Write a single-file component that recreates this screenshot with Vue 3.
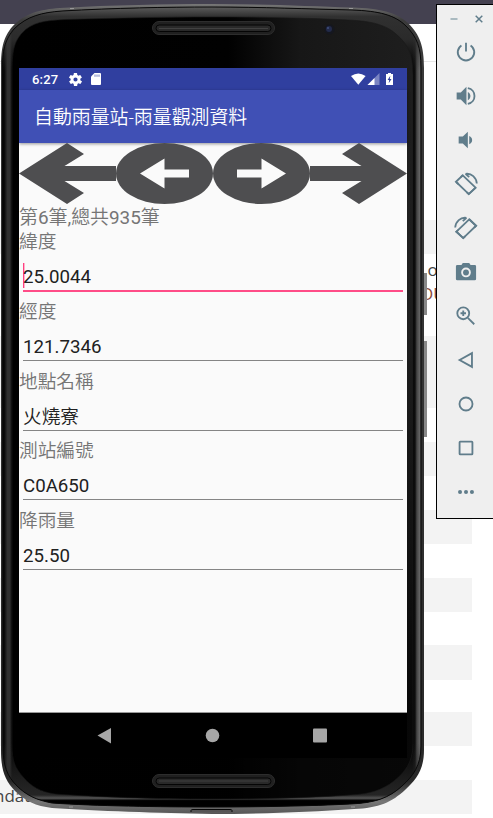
<script setup>
const stripes = [
  [220, 34], [336, 72], [442, 34], [510, 34], [578, 34], [645, 35], [712, 34], [780, 34]
]
const fields = [
  { label: '緯度', value: '25.0044', active: true },
  { label: '經度', value: '121.7346' },
  { label: '地點名稱', value: '火燒寮', han: true },
  { label: '測站編號', value: 'C0A650' },
  { label: '降雨量', value: '25.50' }
]
const body = 'M1 68 C1 46 4 37 12 27 C25 13 40 9.500 60 8 C115 5 165 4 212 4 C260 4 310 6 352 7.500 C380 8.500 396 12 408 23 C420 35 424 46 424 68 V750 C424 770 416 780 405 790 C392 802 379 808 354 809 C310 812 260 814 212 814 C160 813 95 811 52 808 C36 806 25 801 15 791 C5 780 1 771 1 750 Z'
const rim = 'M2.500 68 C2.500 47 6 39 14 29 C27 16 42 12.500 62 11 C115 8 165 7 212 7 C260 7 310 9 352 10 C379 11 395 15 406 26 C417 37 421 47 421 68 V746 C421 766 413 776 402 786 C389 798 375 803 350 804 C310 806 260 807 212 807 C160 807 95 806 52 803 C36 800 26 795 17 786 C7 776 3 766 3 746 Z'
const glass = 'M12 74 C12 51 14 42 22 33 C32 22 45 20.500 65 19.500 C120 18 165 17 212 17 C260 17 310 18 348 20 C372 21 386 25 396 34 C409 45 413 55 413 76 V744 C413 763 404 773 394 781 C382 790 371 794 350 795 C310 798 260 799 212 799 C155 799 95 797 55 794 C40 792 31 786 24 778 C15 768 12 762 12 744 Z'
</script>

<template>
  <main class="desktop">
    <div class="page">
      <div class="page-head"></div>
      <div class="page-rule"></div>
      <i v-for="s in stripes" :key="s[0]" class="stripe" :style="{ top: s[0] + 'px', height: s[1] + 'px' }"></i>
      <span class="code c1">.o</span>
      <span class="code c2">OU</span>
      <span class="code c3">ndat</span>
      <i class="dash d1"></i><i class="dash d2"></i>
    </div>

    <section class="phone">
      <svg class="shell" width="430" height="818" viewBox="0 0 430 818">
        <defs>
          <linearGradient id="side" gradientUnits="userSpaceOnUse" x1="1" y1="0" x2="424" y2="0">
            <stop offset="0" stop-color="#555" /><stop offset=".003" stop-color="#050505" />
            <stop offset=".008" stop-color="#0a0a0a" /><stop offset=".015" stop-color="#303030" />
            <stop offset=".021" stop-color="#303030" /><stop offset=".026" stop-color="#050505" />
            <stop offset=".972" stop-color="#000" /><stop offset=".979" stop-color="#101010" />
            <stop offset=".983" stop-color="#444" /><stop offset=".99" stop-color="#666" />
            <stop offset=".994" stop-color="#303030" /><stop offset="1" stop-color="#777" />
          </linearGradient>
          <linearGradient id="glass" x1="0" y1="0" x2="1" y2="0">
            <stop offset="0" stop-color="#000" /><stop offset=".54" stop-color="#010101" />
            <stop offset=".72" stop-color="#171717" /><stop offset="1" stop-color="#1e1e1e" />
          </linearGradient>
          <linearGradient id="fade" x1="0" y1="0" x2="0" y2="1">
            <stop offset=".4" stop-color="#000" stop-opacity="0" /><stop offset=".9" stop-color="#000" stop-opacity=".75" />
          </linearGradient>
          <linearGradient id="edge" x1="0" y1="0" x2="0" y2="1">
            <stop offset="0" stop-color="#777" /><stop offset=".02" stop-color="#3a3a3a" />
            <stop offset=".96" stop-color="#292929" /><stop offset=".985" stop-color="#777" /><stop offset="1" stop-color="#555" />
          </linearGradient>
          <linearGradient id="rimfill" x1="0" y1="0" x2="0" y2="1">
            <stop offset="0" stop-color="#5c5c5c" /><stop offset=".012" stop-color="#303030" />
            <stop offset=".04" stop-color="#353535" stop-opacity=".8" /><stop offset=".08" stop-color="#303030" stop-opacity="0" />
            <stop offset=".92" stop-color="#303030" stop-opacity="0" /><stop offset=".985" stop-color="#252525" />
            <stop offset=".989" stop-color="#555" /><stop offset=".992" stop-color="#000" /><stop offset="1" stop-color="#000" />
          </linearGradient>
        </defs>
        <path :d="body" fill="url(#edge)" />
        <path :d="rim" fill="url(#side)" />
        <path :d="rim" fill="url(#rimfill)" stroke="#090909" />
        <path :d="glass" fill="url(#glass)" />
        <path :d="glass" fill="url(#fade)" stroke="#191919" stroke-opacity=".6" />
        <path d="M191 812v-1.500q0-1 2-1h37q2 0 2 1v1.500" fill="#555" stroke="#080808" />
        <path d="M70 8.500h4M349 8.500h4M69 807h4M351 807h4" stroke="#999" />
        <g fill="#202020" stroke="#2d2d2d">
          <rect x="152.500" y="21.500" width="122" height="13" rx="6.500" />
          <rect x="152.500" y="774.500" width="122" height="13" rx="6.500" />
        </g>
        <g fill="#292929" stroke="#050505">
          <rect x="156" y="25" width="115" height="6.500" rx="3.250" />
          <rect x="156" y="778" width="115" height="6.500" rx="3.250" />
        </g>
        <path d="M159 28.500h109M159 781h109" stroke="#414141" />
        <circle cx="329.500" cy="29.500" r="5" fill="#15171f" />
        <circle cx="329" cy="29" r="3" fill="#222a49" /><circle cx="328" cy="28" r="1" fill="#404f7c" />
      </svg>

      <div class="screen">
        <header class="status">
          <span class="time">6:27</span>
          <svg class="gear" width="13" height="13" viewBox="2 2 20 20"><path fill="#fff" fill-rule="evenodd" d="M19.400 13a7.800 7.800 0 0 0 0-2l2.100-1.600a.5.5 0 0 0 .1-.7l-2-3.400a.5.5 0 0 0-.6-.2l-2.500 1a7.500 7.500 0 0 0-1.700-1l-.4-2.700a.5.5 0 0 0-.5-.4h-4a.5.5 0 0 0-.5.4l-.4 2.700a7.500 7.500 0 0 0-1.700 1l-2.500-1a.5.5 0 0 0-.6.2l-2 3.400a.5.5 0 0 0 .1.700L4.600 11a7.800 7.800 0 0 0 0 2l-2.100 1.600a.5.5 0 0 0-.1.700l2 3.400c.1.200.4.300.6.200l2.500-1a7.500 7.500 0 0 0 1.700 1l.4 2.700c0 .2.200.4.500.4h4c.3 0 .5-.2.500-.4l.4-2.700a7.500 7.500 0 0 0 1.700-1l2.500 1c.2.100.5 0 .6-.2l2-3.400a.5.5 0 0 0-.1-.7zM12 15.200a3.200 3.200 0 1 1 0-6.400 3.200 3.200 0 0 1 0 6.400z" /></svg>
          <svg class="sd" width="10" height="12" viewBox="0 0 10 12"><path fill="#fff" d="M3.500 0H9a1 1 0 0 1 1 1v10a1 1 0 0 1-1 1H1a1 1 0 0 1-1-1V3.500z" /><path d="M4 1.500v2.300M6 1.500v2.300M8 1.500v2.300" stroke="#7580bf" /></svg>
          <svg class="signals" width="44" height="13" viewBox="0 0 44 13">
            <path fill="#fff" d="M0 3Q7.300-2 14.600 3L7.300 11.700z" />
            <path fill="#7a84c2" d="M28.500 0v12h-12z" /><path fill="#fff" d="M23.500 5v7h-7z" />
            <path fill="#fff" d="M37 0h3v1h2v11h-7V1h2z" /><path fill="#303f9f" d="M39.300 2.800 36.600 7h1.600l-.5 3.300L40.500 6h-1.700z" />
          </svg>
        </header>
        <h1>自動雨量站-雨量觀測資料</h1>
        <div class="content">
          <nav class="arrows">
            <svg viewBox="0 0 97 61"><path d="M0 30.500 48 0 65 11 45.500 23H97v15H45.500L65 50 48 61z" /></svg>
            <svg viewBox="0 0 97 61"><ellipse cx="48.500" cy="30.500" rx="48.500" ry="30.500" /><path class="light" d="M24 30.500 48.500 15.500v11H73v8H48.500v11z" /></svg>
            <svg viewBox="0 0 97 61"><ellipse cx="48.500" cy="30.500" rx="48.500" ry="30.500" /><path class="light" d="M73 30.500 48.500 15.500v11H24v8h24.500v11z" /></svg>
            <svg viewBox="0 0 97 61"><path d="M97 30.500 49 0 32 11 51.500 23H0v15h51.500L32 50 49 61z" /></svg>
          </nav>
          <p class="label count">第<b>6</b>筆<b>,</b>總共<b>935</b>筆</p>
          <div v-for="f in fields" :key="f.label" class="field">
            <p class="label">{{ f.label }}</p>
            <div class="value" :class="{ active: f.active, han: f.han }">{{ f.value }}</div>
          </div>
        </div>
        <footer class="keys">
          <svg width="388" height="46" viewBox="0 0 388 46" fill="#a6a6a6">
            <path d="M78.500 22.500 92 15v15.500z" /><circle cx="193.500" cy="22.500" r="6.800" /><rect x="294" y="15.500" width="14" height="14" rx="1" />
          </svg>
        </footer>
      </div>
    </section>

    <aside class="tools">
      <div class="window-keys">
        <svg width="56" height="24" viewBox="0 0 56 24"><path d="M13.500 14h7" stroke="#9db0b8" stroke-width="1.700" /><path d="m38.700 10.800 6.600 6.400m0-6.400-6.600 6.400" stroke="#607d8b" stroke-width="1.500" /></svg>
      </div>
      <svg class="tool" viewBox="0 0 24 24"><path class="ln" stroke-width="2.300" d="M12 2v9.500M7 4.800a9 9 0 1 0 10 0" /></svg>
      <svg class="tool" viewBox="0 0 24 24"><path d="M1.800 8.300h4.500L12.500 2v20l-6.200-6.200H1.800zM14 7.500c3.800 2 3.800 7 0 9z" /><path class="ln" stroke-width="2.200" d="M14 3.500c9.700 1.700 9.700 15.300 0 17" /></svg>
      <svg class="tool" viewBox="0 0 24 24"><path d="M4 8.300h4.500L14 3v18l-5.500-5.300H4zM15.500 7.500c4.300 1.500 4.300 7.500 0 9z" /></svg>
      <svg class="tool" viewBox="0 0 24 24"><path class="ln" stroke-width="1.700" d="M8.500 2.500 22.500 16 15 23 1 9.500z" /><path class="ln" stroke-width="3.200" d="M8.500 2.500 6.300 4.500M1.300 9.800l2.300 2.200M13 21l2 2 7.500-7" /><path class="ln" stroke-width="1.500" d="M11.500 1C18 0 23.300 5 23.800 11.500M11.500 1l4 3.500" /></svg>
      <svg class="tool" viewBox="0 0 24 24"><path class="ln" stroke-width="1.700" d="M15.500 2.500 1.500 16 9 23 23 9.500z" /><path class="ln" stroke-width="3.200" d="M15.500 2.500 23 9.500l-2 2M3.500 14.300 1.500 16 9 23l2-2" /><path class="ln" stroke-width="1.500" d="M12.500 1C6 0 .7 5 .2 11.500M12.500 1l-4 3.500" /></svg>
      <svg class="tool" viewBox="0 0 24 24"><path fill-rule="evenodd" d="M8.500 2.300h7l1.500 2h4.500q1.500 0 1.500 1.500v13.700q0 1.500-1.500 1.500h-19Q1 21 1 19.500V5.800q0-1.500 1.500-1.500H7zM12 7.200a5.300 5.300 0 1 0 0 10.600 5.300 5.300 0 0 0 0-10.600" /><circle cx="12" cy="12.500" r="3.200" /></svg>
      <svg class="tool" viewBox="0 0 24 24"><circle class="ln" cx="9" cy="9" r="6.500" stroke-width="1.900" /><path class="ln" d="m14 14 7 7" stroke-width="2.700" /><path class="ln" d="M9 6v6M6 9h6" stroke-width="1.400" /></svg>
      <svg class="tool" viewBox="0 0 24 24"><path class="ln" stroke-width="1.600" d="M5 12 18.500 4.500v15z" /></svg>
      <svg class="tool" viewBox="0 0 24 24"><circle class="ln" cx="12" cy="12" r="7.100" stroke-width="1.600" /></svg>
      <svg class="tool" viewBox="0 0 24 24"><rect class="ln" x="5" y="5" width="14" height="14" rx=".7" stroke-width="1.700" /></svg>
      <svg class="tool" viewBox="0 0 24 24"><circle cx="5.500" cy="12" r="2.200" /><circle cx="12" cy="12" r="2.200" /><circle cx="18.500" cy="12" r="2.200" /></svg>
    </aside>
  </main>
</template>

<style>
body { margin: 0; overflow: hidden; background: #fff; }
</style>

<style scoped>
.desktop { position: relative; width: 493px; height: 818px; overflow: hidden; font-family: Roboto, "Noto Sans CJK TC", sans-serif; }
.page { position: absolute; inset: 0; background: #fff; }
.page-head { height: 24px; background: #444150; }
.page-rule { height: 37px; border-bottom: 1px solid #e7e7e7; }
.stripe { position: absolute; left: 0; width: 472px; background: #f3f3f3; }
.code { position: absolute; font: 17px/24px "Open Sans", sans-serif; color: #444; }
.c1 { left: 423px; top: 258px; }
.c2 { left: 420px; top: 282px; color: #8a4a3a; }
.c3 { left: -6px; top: 784px; }
.dash { position: absolute; left: 423px; width: 4px; background: #888; }
.d1 { top: 273px; height: 42px; }
.d2 { top: 341px; height: 96px; }
.phone { position: absolute; left: 0; top: 0; width: 430px; height: 818px; }
.shell { position: absolute; left: 0; top: 0; }
.screen { position: absolute; left: 19px; top: 68px; width: 388px; height: 690px; display: flex; flex-direction: column; background: #fafafa; }
.status { height: 22px; flex: none; display: flex; align-items: center; padding: 0 13px; background: #303f9f; color: #fff; }
.time { width: 37px; font-size: 13px; font-weight: 500; letter-spacing: .2px; }
.sd { margin-left: 9px; }
.signals { margin-left: auto; margin-right: -1px; }
h1 { position: relative; flex: none; box-sizing: border-box; height: 53px; margin: 0; padding: 1px 0 0 15px; background: #4050b5; color: #fff; font-size: 18.900px; font-weight: 350; line-height: 54px; box-shadow: 0 1px 3px rgba(0, 0, 0, .4); white-space: nowrap; }
.content { flex: 1; font-size: 18.700px; }
.arrows { position: relative; display: flex; height: 62px; fill: #4e4e50; }
.arrows svg { width: 97px; height: 61px; }
.light { fill: #fafafa; }
.label { margin: 0; height: 25px; line-height: 25px; font-weight: 350; color: #757575; white-space: nowrap; }
.label b { font-weight: 400; }
.count { font-size: 18.900px; }
.field { height: 69.800px; }
.value { box-sizing: border-box; height: 36px; margin: 0 4px; padding-top: 10px; border-bottom: 1px solid #858585; color: #212121; line-height: 25px; }
.value.han { font-weight: 350; }
.value.active { height: 37px; border-bottom: 2px solid #ff4c87; background: linear-gradient(90deg, #ff4081 50%, #ffb3cc 50%) 0 8px / 2px 25px no-repeat; }
.keys { height: 45px; flex: none; background: #000; box-shadow: 0 -1px #999; }
.tools { position: absolute; left: 436px; top: 4px; width: 57px; height: 515px; box-sizing: border-box; border: 1px solid #000; border-right: 0; background: #efefef; display: flex; flex-direction: column; align-items: center; }
.window-keys { height: 29px; flex: none; width: 56px; }
.tool { width: 22px; height: 22px; margin: 7px 2px 15px 4px; flex: none; fill: #607d8b; overflow: visible; }
.tool:last-child { margin-bottom: 0; }
.ln { fill: none; stroke: #607d8b; stroke-width: 2; }
</style>
